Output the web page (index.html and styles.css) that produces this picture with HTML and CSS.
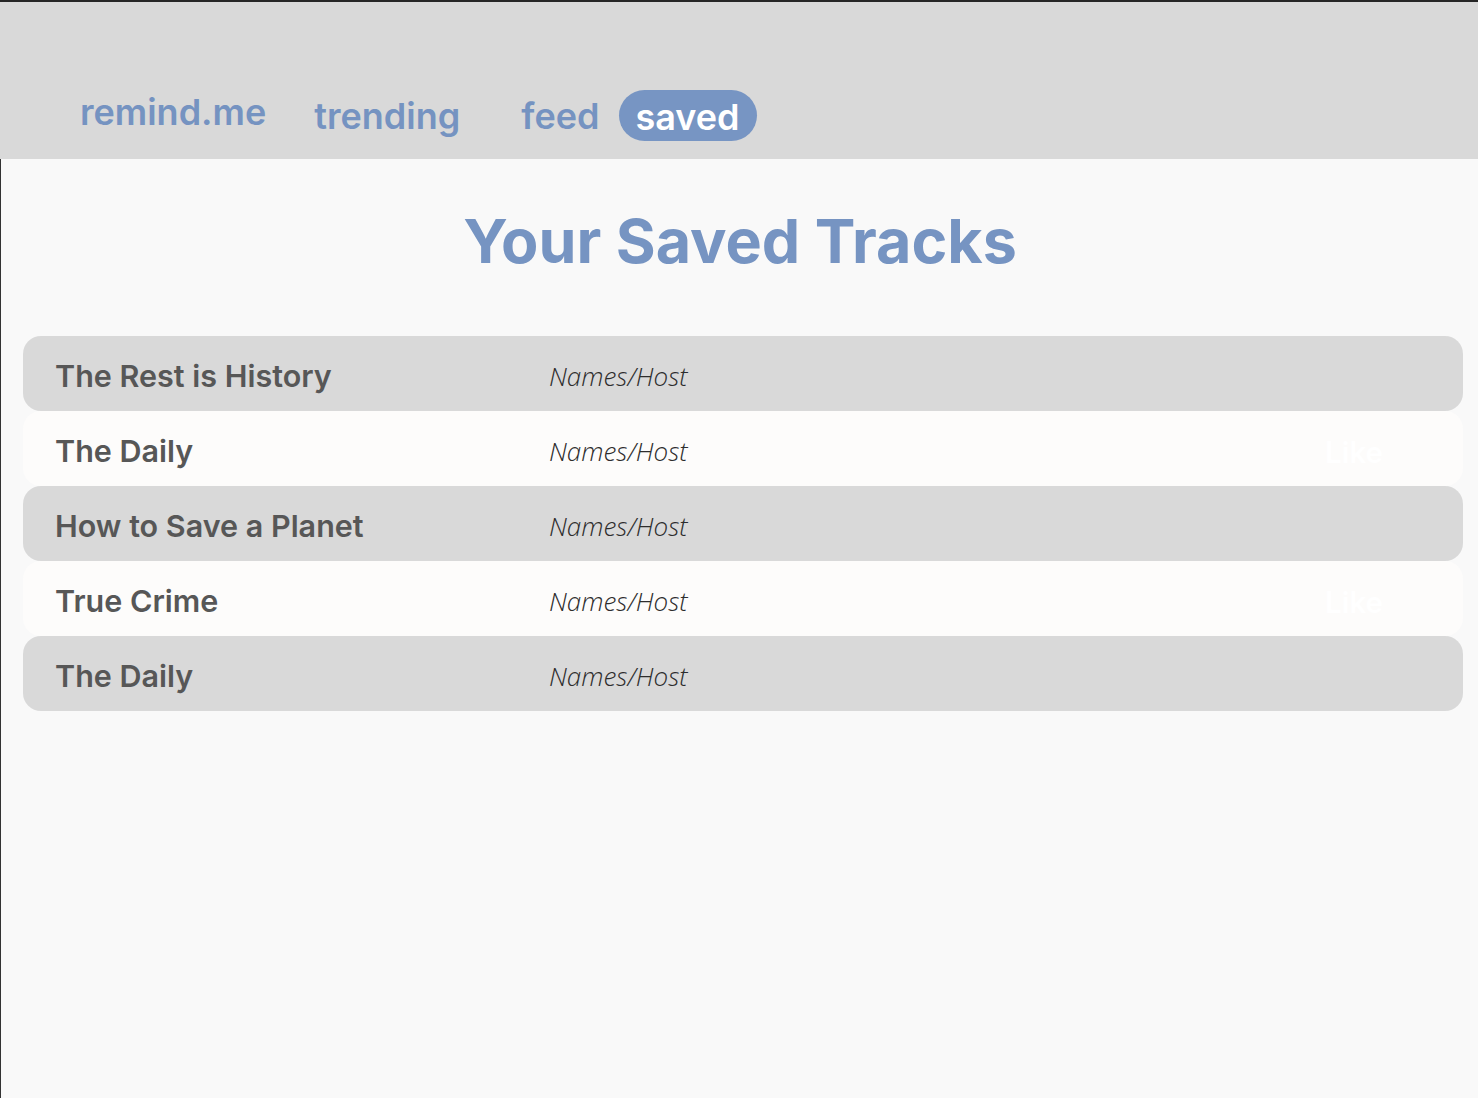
FILE: index.html
```html
<!DOCTYPE html>
<html>
<head>
<meta charset="utf-8">
<link rel="stylesheet" href="styles.css">
</head>
<body>
<div class="page">
  <header class="topbar">
    <nav class="nav">
      <a class="brand">remind.me</a>
      <a class="nav-link trending">trending</a>
      <a class="nav-link feed">feed</a>
      <a class="nav-link active">saved</a>
    </nav>
  </header>
  <main class="content">
    <h1 class="title">Your Saved Tracks</h1>
    <ul class="tracks">
      <li class="track shade"><span class="track-name">The Rest is History</span><span class="track-host">Names/Host</span></li>
      <li class="track light"><span class="track-name">The Daily</span><span class="track-host">Names/Host</span><span class="like">Like</span></li>
      <li class="track shade"><span class="track-name">How to Save a Planet</span><span class="track-host">Names/Host</span></li>
      <li class="track light"><span class="track-name">True Crime</span><span class="track-host">Names/Host</span><span class="like">Like</span></li>
      <li class="track shade"><span class="track-name">The Daily</span><span class="track-host">Names/Host</span></li>
    </ul>
  </main>
</div>
</body>
</html>
```

FILE: styles.css
```css
* { box-sizing: border-box; }
html, body { margin: 0; padding: 0; }
body {
  background: #f9f9f9;
  border-top: 2px solid #262626;
  font-family: "Inter", "Open Sans", sans-serif;
  min-height: 1098px;
}
.page {
  min-height: 1096px;
  display: flex;
  flex-direction: column;
}
.topbar {
  background: #d9d9d9;
  height: 157px;
  display: flex;
  align-items: flex-end;
  padding: 0 0 18px 80px;
}
.nav {
  display: flex;
  align-items: center;
}
.nav a { text-decoration: none; font-weight: 600; color: #7593c1; }
.brand { font-size: 36px; margin-right: 48px; margin-top: -8px; }
.nav-link { font-size: 36px; }
.trending { margin-right: 61px; }
.feed { margin-right: 20px; }
.active {
  background: #7795c3;
  color: #ffffff !important;
  height: 51px;
  border-radius: 26px;
  padding: 2px 18px 0 16px;
  display: flex;
  align-items: center;
}
.content {
  flex: 1;
  border-left: 1px solid #333;
  padding: 0 15px 0 22px;
}
.title {
  margin: 44px 0 57px;
  text-align: center;
  font-size: 61px;
  font-weight: 700;
  color: #7694c2;
  line-height: 76px;
  padding-right: 6px;
}
.tracks {
  list-style: none;
  margin: 0;
  padding: 0;
}
.track {
  height: 75px;
  border-radius: 18px;
  display: flex;
  align-items: center;
  padding-left: 32px;
}
.shade { background: #d9d9d9; }
.light { background: #fdfcfb; }
.track-name {
  width: 494px;
  font-size: 30.5px;
  font-weight: 600;
  color: #575757;
  padding-top: 3px;
}
.track-host {
  flex: 1;
  font-family: "Open Sans", sans-serif;
  font-size: 26px;
  font-style: italic;
  font-weight: 300;
  color: #2d2d2d;
  padding-top: 5px;
}
.like {
  font-size: 29.5px;
  font-weight: 600;
  color: #ffffff;
  margin-right: 80px;
  padding-top: 6px;
}
```
